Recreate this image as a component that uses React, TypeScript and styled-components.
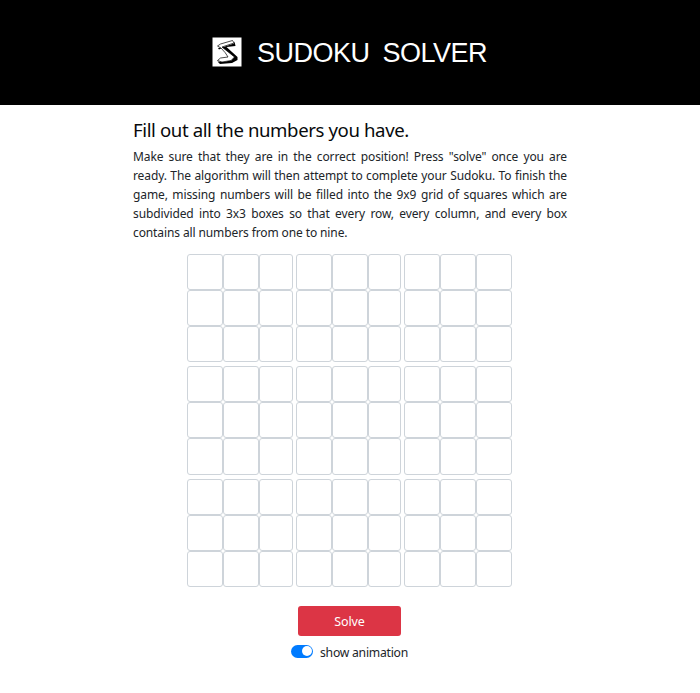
import React, { useState } from "react";
import styled, { createGlobalStyle } from "styled-components";

const GlobalStyle = createGlobalStyle`
  * { box-sizing: border-box; }
  body {
    margin: 0;
    background: #fff;
    color: #212529;
    font-family: "Noto Sans", "Open Sans", sans-serif;
  }
`;

const Page = styled.div`
  height: 693px;
  overflow: hidden;
  display: flex;
  flex-direction: column;
`;

const Header = styled.header`
  height: 105px;
  flex: none;
  background: #000;
  display: flex;
  align-items: center;
  padding: 0 0 1px 212px;
`;

const Logo = styled.svg`
  width: 30px;
  height: 30px;
  flex: none;
  margin-right: 15px;
`;

const Brand = styled.h1`
  margin: 0;
  padding-top: 1px;
  color: #fff;
  font: 400 27px/30px "Liberation Sans", sans-serif;
  letter-spacing: -0.5px;
  word-spacing: 6px;
  white-space: nowrap;
`;

const Main = styled.main`
  width: 434px;
  margin: 0 0 0 133px;
`;

const Heading = styled.h2`
  margin: 12px 0 4px;
  color: #080a0c;
  font-size: 18.6px;
  font-weight: 400;
  line-height: 26px;
  letter-spacing: -0.39px;
  white-space: nowrap;
`;

const Intro = styled.p`
  margin: 0;
  font-size: 12px;
  line-height: 19px;
  letter-spacing: -0.11px;
`;

const Line = styled.span<{ $last?: boolean }>`
  display: block;
  white-space: nowrap;
  text-align: justify;
  text-align-last: ${(p) => (p.$last ? "left" : "justify")};
`;

const Board = styled.div`
  display: grid;
  grid-template-columns: 106px 105px 108px;
  gap: 4px 3px;
  margin: 12px 0 0 54px;
`;

const Box = styled.div`
  display: grid;
  grid-template-columns: 36.1px 36.1px 1fr;
  grid-template-rows: repeat(3, 36.1px);
`;

const Cell = styled.input`
  width: 100%;
  height: 100%;
  min-width: 0;
  padding: 0;
  border: 1px solid #ced4da;
  border-radius: 3px;
  background: #fff;
  color: #212529;
  font: inherit;
  text-align: center;
  outline: none;
`;

const Controls = styled.div`
  width: 699px;
  display: flex;
  flex-direction: column;
  align-items: center;
  padding-top: 19px;
`;

const SolveButton = styled.button`
  width: 103px;
  height: 30px;
  padding: 2px 0 0;
  border: 0;
  border-radius: 3px;
  background: #dc3545;
  color: #fff;
  font: 400 12.5px/20px "Noto Sans", sans-serif;
  letter-spacing: -0.15px;
`;

const SwitchLabel = styled.label`
  display: flex;
  align-items: center;
  gap: 7px;
  margin-top: 7px;
  font-size: 12.2px;
  line-height: 20px;
  letter-spacing: -0.25px;
`;

const Switch = styled.button<{ $on: boolean }>`
  display: flex;
  justify-content: ${(p) => (p.$on ? "flex-end" : "flex-start")};
  align-items: center;
  width: 22px;
  height: 13px;
  margin-bottom: 3px;
  padding: 1.5px;
  border: 0;
  border-radius: 7px;
  background: ${(p) => (p.$on ? "#007bff" : "#adb5bd")};
`;

const Knob = styled.span`
  width: 10px;
  height: 10px;
  border-radius: 50%;
  background: #fff;
`;

const lines = [
  'Make sure that they are in the correct position! Press "solve" once you are',
  "ready. The algorithm will then attempt to complete your Sudoku. To finish the",
  "game, missing numbers will be filled into the 9x9 grid of squares which are",
  "subdivided into 3x3 boxes so that every row, every column, and every box",
  "contains all numbers from one to nine.",
];

const nine = Array.from({ length: 9 }, (_, i) => i);

export default function App() {
  const [animate, setAnimate] = useState(true);
  return (
    <Page>
      <GlobalStyle />
      <Header>
        <Logo viewBox="0 0 30 30" aria-hidden="true">
          <rect x="0.5" y="0.5" width="29" height="29" fill="#fff" />
          <path
            d="M6 11 L10 10.5 L22 6.5 L22.5 4.5 L23.5 9 L14.5 10 L25.5 20 L25.5 23 L20 26 L8 27 L5.5 24.5 L10 25 L19 23.5 L22 20.5 L10 11 L7 12.5 Z"
            fill="#000"
          />
          <path
            d="M5.5 9 L8.5 7 L20.5 3.5 L22 6 L10 10 L22.5 20 L19 23.5 L10 25 L5.5 23.5 L8.5 21 L16 20 Q14 16 9 11 Z"
            fill="#fff"
            stroke="#000"
            strokeWidth="0.7"
          />
        </Logo>
        <Brand>SUDOKU SOLVER</Brand>
      </Header>
      <Main>
        <Heading>Fill out all the numbers you have.</Heading>
        <Intro>
          {lines.map((line, i) => (
            <Line key={line} $last={i === lines.length - 1}>
              {line}
            </Line>
          ))}
        </Intro>
        <Board>
          {nine.map((box) => (
            <Box key={box}>
              {nine.map((cell) => (
                <Cell key={cell} maxLength={1} aria-label={`Box ${box + 1}, cell ${cell + 1}`} />
              ))}
            </Box>
          ))}
        </Board>
      </Main>
      <Controls>
        <SolveButton>Solve</SolveButton>
        <SwitchLabel>
          <Switch
            $on={animate}
            role="switch"
            aria-checked={animate}
            onClick={() => setAnimate(!animate)}
          >
            <Knob />
          </Switch>
          show animation
        </SwitchLabel>
      </Controls>
    </Page>
  );
}
